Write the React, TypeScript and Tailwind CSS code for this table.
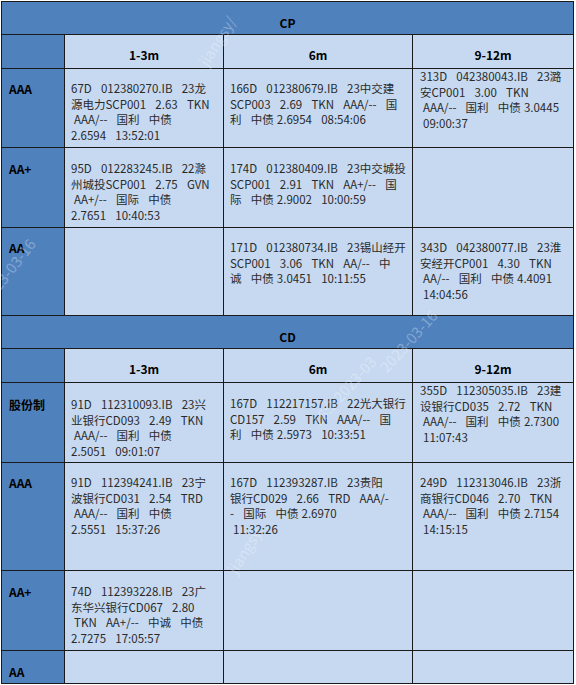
import React from "react";

type DataCell = { lines: string[]; pt: string; pl: string } | null;
type Row = { label: string; pt: string; cells: DataCell[] };

const c = (lines: string[], pt = "pt-[12px]", pl = "pl-[6px]"): DataCell => ({ lines, pt, pl });

const cpRows: Row[] = [
  {
    label: "AAA",
    pt: "pt-[12px]",
    cells: [
      c(["67D   012380270.IB   23龙", "源电力SCP001   2.63   TKN", " AAA/--   国利   中债", "2.6594   13:52:01"]),
      c(["166D   012380679.IB   23中交建", "SCP003   2.69   TKN   AAA/--   国", "利   中债 2.6954   08:54:06"]),
      c(["313D   042380043.IB   23潞", "安CP001   3.00   TKN", " AAA/--   国利   中债 3.0445", " 09:00:37"], "pt-[0px]", "pl-[7px]"),
    ],
  },
  {
    label: "AA+",
    pt: "pt-[13px]",
    cells: [
      c(["95D   012283245.IB   22滁", "州城投SCP001   2.75   GVN", " AA+/--   国际   中债", "2.7651   10:40:53"], "pt-[13px]"),
      c(["174D   012380409.IB   23中交城投", "SCP001   2.91   TKN   AA+/--   国", "际   中债 2.9002   10:00:59"], "pt-[13px]"),
      null,
    ],
  },
  {
    label: "AA",
    pt: "pt-[12px]",
    cells: [
      null,
      c(["171D   012380734.IB   23锡山经开", "SCP001   3.06   TKN   AA/--   中", "诚   中债 3.0451   10:11:55"]),
      c(["343D   042380077.IB   23淮", "安经开CP001   4.30   TKN", " AA/--   国利   中债 4.4091", " 14:04:56"], "pt-[12px]", "pl-[7px]"),
    ],
  },
];

const cdRows: Row[] = [
  {
    label: "股份制",
    pt: "pt-[14px]",
    cells: [
      c(["91D   112310093.IB   23兴", "业银行CD093   2.49   TKN", " AAA/--   国利   中债", "2.5051   09:01:07"], "pt-[14px]"),
      c(["167D   112217157.IB   22光大银行", "CD157   2.59   TKN   AAA/--   国", "利   中债 2.5973   10:33:51"], "pt-[13px]"),
      c(["355D   112305035.IB   23建", "设银行CD035   2.72   TKN", " AAA/--   国利   中债 2.7300", " 11:07:43"], "pt-[0px]", "pl-[7px]"),
    ],
  },
  {
    label: "AAA",
    pt: "pt-[12px]",
    cells: [
      c(["91D   112394241.IB   23宁", "波银行CD031   2.54   TRD", " AAA/--   国利   中债", "2.5551   15:37:26"]),
      c(["167D   112393287.IB   23贵阳", "银行CD029   2.66   TRD   AAA/-", "-   国际   中债 2.6970", " 11:32:26"]),
      c(["249D   112313046.IB   23浙", "商银行CD046   2.70   TKN", " AAA/--   国利   中债 2.7154", " 14:15:15"], "pt-[12px]", "pl-[7px]"),
    ],
  },
  {
    label: "AA+",
    pt: "pt-[13px]",
    cells: [
      c(["74D   112393228.IB   23广", "东华兴银行CD067   2.80", " TKN   AA+/--   中诚   中债", "2.7275   17:05:57"], "pt-[13px]"),
      null,
      null,
    ],
  },
  {
    label: "AA",
    pt: "pt-[13px]",
    cells: [null, null, null],
  },
];

const BLUE = "bg-[#4f81bd]";
const LIGHT = "bg-[#c6d9f1]";

function SectionHeader({ title }: { title: string }) {
  return (
    <div className={`col-span-4 ${BLUE} pt-[13px] text-center text-[12px] leading-[16px] font-bold text-black`}>
      {title}
    </div>
  );
}

function ColHeaders() {
  return (
    <>
      <div className={BLUE} />
      {["1-3m", "6m", "9-12m"].map((t) => (
        <div key={t} className={`${LIGHT} pt-[12px] text-center text-[12px] leading-[16px] font-bold text-black`}>
          {t}
        </div>
      ))}
    </>
  );
}

function DataRow({ row }: { row: Row }) {
  return (
    <>
      <div className={`${BLUE} ${row.pt} pl-[7px] text-[12px] leading-[16px] font-bold text-black`}>{row.label}</div>
      {row.cells.map((cell, i) => (
        <div key={i} className={`${LIGHT} overflow-hidden`}>
          {cell && (
            <div
              className={`${cell.pt} ${cell.pl} text-[11.5px] leading-[15.5px] text-[#2a2a2a] whitespace-pre [word-spacing:0.5px]`}
            >
              {cell.lines.map((l, j) => (
                <div key={j}>{l}</div>
              ))}
            </div>
          )}
        </div>
      ))}
    </>
  );
}

export default function App() {
  return (
    <div
      className="relative w-[576px] h-[685px] bg-white pl-px pt-px overflow-hidden"
      style={{ fontFamily: '"Noto Sans CJK SC", "Noto Sans", sans-serif' }}
    >
      <div className="grid w-fit grid-cols-[62px_158px_188px_160px] grid-rows-[32px_33px_78px_79px_87px_32px_33px_79px_107px_79px_32px] gap-px bg-[#1a1a1a] p-px">
        <SectionHeader title="CP" />
        <ColHeaders />
        {cpRows.map((r, i) => (
          <DataRow key={"cp" + i} row={r} />
        ))}
        <SectionHeader title="CD" />
        <ColHeaders />
        {cdRows.map((r, i) => (
          <DataRow key={"cd" + i} row={r} />
        ))}
      </div>

      {/* watermark */}
      <div className="pointer-events-none absolute inset-0 text-[15px] text-white/30">
        <span className="absolute left-[190px] top-[30px] -rotate-[58deg] whitespace-nowrap">jiangsy/</span>
        <span className="absolute left-[-30px] top-[260px] -rotate-[52deg] whitespace-nowrap">2023-03-16</span>
        <span className="absolute left-[370px] top-[330px] -rotate-[48deg] whitespace-nowrap">2023-03-16</span>
        <span className="absolute left-[300px] top-[380px] -rotate-[48deg] whitespace-nowrap">16:2  2023-03</span>
        <span className="absolute left-[220px] top-[540px] -rotate-[58deg] whitespace-nowrap">jiangsy</span>
      </div>
    </div>
  );
}
